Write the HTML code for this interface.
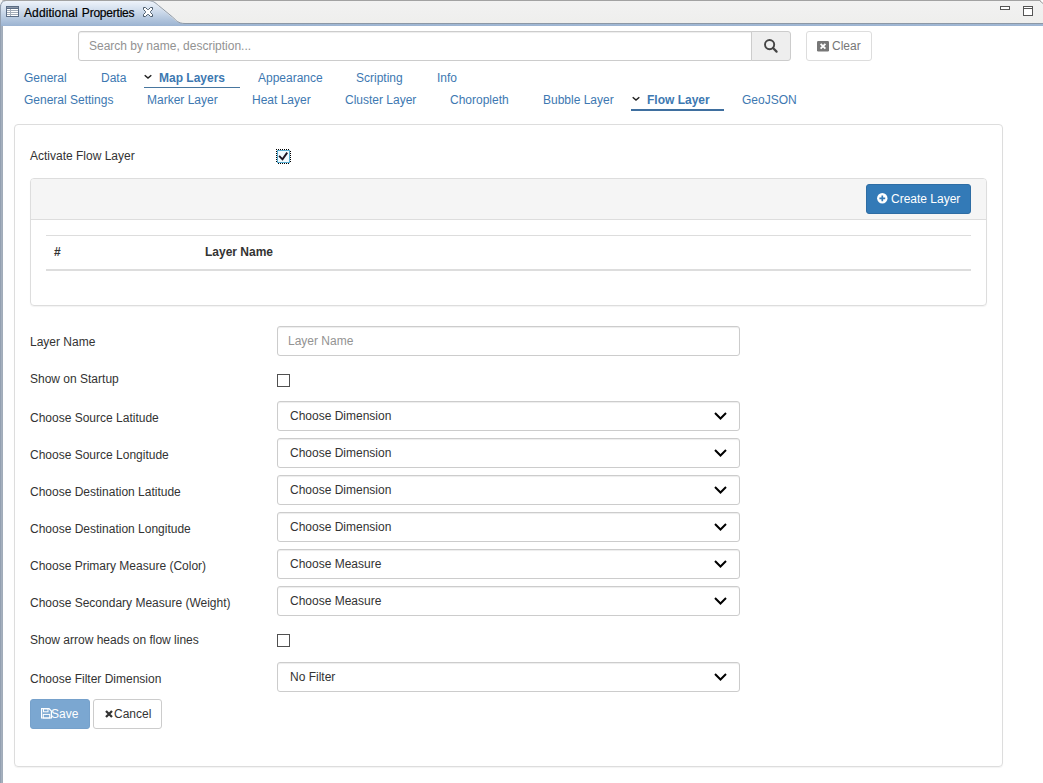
<!DOCTYPE html>
<html><head><meta charset="utf-8">
<style>
*{box-sizing:border-box}
html,body{margin:0;padding:0}
body{width:1043px;height:783px;overflow:hidden;background:#fff;font-family:"Liberation Sans",Arial,sans-serif;font-size:12px;color:#333;position:relative}
.abs{position:absolute}
svg{position:absolute;overflow:visible}
#title{left:24px;top:6px;font-size:12px;color:#000;-webkit-text-stroke:.2px #000;white-space:nowrap;line-height:14px}
/* search */
#search{left:78px;top:31px;width:674px;height:30px;border:1px solid #ccc;border-radius:3px 0 0 3px;padding:0 10px;line-height:28px;color:#929292;box-shadow:inset 0 1px 1px rgba(0,0,0,.075)}
#sbtn{left:751px;top:31px;width:40px;height:30px;border:1px solid #ccc;border-radius:0 3px 3px 0;background:#eee}
#clear{left:806px;top:31px;width:66px;height:30px;border:1px solid #ddd;border-radius:3px;color:#777;line-height:28px}
.nav{white-space:nowrap;color:#3d78b1;line-height:14px}
.nav.b{font-weight:bold}
.ul{height:1px;background:#47769f}
#panel{left:14px;top:124px;width:989px;height:643px;border:1px solid #ddd;border-radius:4px;box-shadow:0 1px 1px rgba(0,0,0,.05)}
#inner{left:30px;top:178px;width:957px;height:128px;border:1px solid #ddd;border-radius:4px;box-shadow:0 1px 1px rgba(0,0,0,.05)}
#ihead{left:31px;top:179px;width:955px;height:41px;background:#f5f5f5;border-bottom:1px solid #ddd;border-radius:3px 3px 0 0}
#create{left:866px;top:184px;width:105px;height:30px;background:#337ab7;border:1px solid #2e6da4;border-radius:3px;color:#fff;line-height:28px;white-space:nowrap}
.lbl{left:30px;white-space:nowrap;line-height:14px;color:#333}
.sel,.inp{left:277px;width:463px;height:30px;border:1px solid #ccc;border-radius:3px;line-height:28px;padding-left:12px;white-space:nowrap;box-shadow:inset 0 1px 1px rgba(0,0,0,.075);color:#333}
.inp{color:#939393;padding-left:10px}
.cb{left:277px;width:13px;height:13px;border:1px solid #505050;background:#fff}
</style></head><body>
<!-- eclipse chrome -->
<svg id="chrome" width="1043" height="27" style="left:0;top:0" viewBox="0 0 1043 27">
<defs>
<linearGradient id="tg" x1="0" y1="0" x2="0" y2="1"><stop offset="0" stop-color="#eef3fa"/><stop offset="0.35" stop-color="#d3dfee"/><stop offset="1" stop-color="#9bb3d1"/></linearGradient>
<linearGradient id="bg" x1="0" y1="0" x2="0" y2="1"><stop offset="0" stop-color="#f2f2f2"/><stop offset="1" stop-color="#eeeeec"/></linearGradient>
</defs>
<rect x="0" y="0" width="1043" height="26" fill="url(#bg)"/>
<path d="M0,26 L0,6 Q0,1 5,1 L147,1 C153,1 155,3 158,6 L172,17.5 C176,21 178,23.5 185,23.5 L1043,23.5 L1043,26 Z" fill="url(#tg)"/>
<path d="M0.5,7 Q0.5,1 6,0.5 L147,0.5 C153,0.5 155,2.5 158.5,5.5 L172.5,17 C176.5,20.5 178,23.5 185,23.5 L1043,23.5" fill="none" stroke="#8c98a6" stroke-width="1"/>
<rect x="0" y="0" width="1043" height="1" fill="#a2a2a2"/>
<path d="M0,0 L4,0 Q0.5,0.5 0,5 Z" fill="#f4f4f4"/>
<path d="M1043,0 L1040,0 L1043,3 Z" fill="#fff"/>
<path d="M1039.5,0.5 L1043,3.5" stroke="#9a9a9a" fill="none"/>
</svg>
<div class="abs" style="left:0;top:5px;width:1px;height:778px;background:#93a0b1"></div>
<div class="abs" style="left:1px;top:26px;width:1px;height:757px;background:#a5b0be"></div><div class="abs" style="left:2px;top:26px;width:1px;height:757px;background:#a1acb9"></div>
<!-- view icon -->
<svg width="13" height="11" style="left:6px;top:6px" viewBox="0 0 13 11" shape-rendering="crispEdges">
<rect x="0" y="0" width="13" height="11" fill="#5b6c84"/>
<rect x="1" y="1" width="11" height="1" fill="#8d99aa"/>
<rect x="1" y="3" width="11" height="7" fill="#a3acb8"/>
<g fill="#fff"><rect x="1" y="3" width="3" height="1"/><rect x="5" y="3" width="7" height="1"/><rect x="1" y="5" width="3" height="1"/><rect x="5" y="5" width="7" height="1"/><rect x="1" y="7" width="3" height="1"/><rect x="5" y="7" width="7" height="1"/><rect x="1" y="9" width="3" height="1"/><rect x="5" y="9" width="7" height="1"/></g>
</svg>
<div class="abs" id="title"><span style="letter-spacing:.1px">Additional</span> <span style="letter-spacing:-.22px;margin-left:.8px">Properties</span></div>
<!-- close X -->
<svg width="10" height="10" style="left:143px;top:7px" viewBox="0 0 10 10">
<path d="M0.5,0.5 L2.5,0.5 L4.5,2.5 L5.5,2.5 L7.5,0.5 L9.5,0.5 L9.5,2.5 L7.5,4.5 L7.5,5.5 L9.5,7.5 L9.5,9.5 L7.5,9.5 L5.5,7.5 L4.5,7.5 L2.5,9.5 L0.5,9.5 L0.5,7.5 L2.5,5.5 L2.5,4.5 L0.5,2.5 Z" fill="#fff" stroke="#4a5a6a" stroke-width="1"/>
</svg>
<!-- min / max -->
<svg width="10" height="4" style="left:1000px;top:6px" viewBox="0 0 10 4" shape-rendering="crispEdges"><rect x="0.5" y="0.5" width="9" height="3" fill="#fff" stroke="#555"/></svg>
<svg width="10" height="10" style="left:1023px;top:6px" viewBox="0 0 10 10" shape-rendering="crispEdges"><rect x="0.5" y="0.5" width="9" height="9" fill="#fff" stroke="#555"/><rect x="0" y="2" width="10" height="1" fill="#555"/></svg>

<div class="abs" id="search">Search by name, description...</div>
<div class="abs" id="sbtn"></div>
<svg width="14" height="14" style="left:763px;top:38px" viewBox="0 0 14 14"><circle cx="6.6" cy="6.6" r="4.6" fill="none" stroke="#444" stroke-width="1.9"/><path d="M10,10 L13.6,13.6" stroke="#444" stroke-width="2.2" stroke-linecap="round"/></svg>
<div class="abs" id="clear"><span style="margin-left:25px">Clear</span></div>
<svg width="12" height="11" style="left:817px;top:40.5px" viewBox="0 0 12 11"><rect x="0" y="0" width="12" height="10.5" rx="1.2" fill="#777"/><path d="M3.6,2.8 L8.4,7.6 M8.4,2.8 L3.6,7.6" stroke="#fff" stroke-width="1.9"/></svg>

<div class="abs nav" style="left:24px;top:71px">General</div>
<div class="abs nav" style="left:101px;top:71px">Data</div>
<svg width="8" height="6" style="left:143.8px;top:73.6px" viewBox="0 0 8 6"><path d="M0.7,1.2 L4,4 L7.3,1.2" fill="none" stroke="#222" stroke-width="1.5"/></svg>
<div class="abs nav b" style="left:159px;top:71px">Map Layers</div>
<div class="abs nav" style="left:258px;top:71px">Appearance</div>
<div class="abs nav" style="left:356px;top:71px">Scripting</div>
<div class="abs nav" style="left:437px;top:71px">Info</div>
<div class="abs ul" style="left:144px;top:87px;width:96px"></div>

<div class="abs nav" style="left:24px;top:93px">General Settings</div>
<div class="abs nav" style="left:147px;top:93px">Marker Layer</div>
<div class="abs nav" style="left:252px;top:93px">Heat Layer</div>
<div class="abs nav" style="left:345px;top:93px">Cluster Layer</div>
<div class="abs nav" style="left:450px;top:93px">Choropleth</div>
<div class="abs nav" style="left:543px;top:93px">Bubble Layer</div>
<svg width="8" height="6" style="left:632px;top:95.6px" viewBox="0 0 8 6"><path d="M0.7,1.2 L4,4 L7.3,1.2" fill="none" stroke="#222" stroke-width="1.5"/></svg>
<div class="abs nav b" style="left:647px;top:93px">Flow Layer</div>
<div class="abs nav" style="left:742px;top:93px">GeoJSON</div>
<div class="abs ul" style="left:631px;top:109px;width:93px;height:2px;background:#3f6f9f"></div>

<div class="abs" id="panel"></div>
<div class="abs lbl" style="top:149px">Activate Flow Layer</div>
<svg width="15" height="15" style="left:276px;top:149px" viewBox="0 0 15 15">
<rect x="1.5" y="1.5" width="12" height="12" fill="#f0faff" stroke="#58acd0" shape-rendering="crispEdges"/>
<path d="M0,0.5 H13 M14.5,2 V13 M2,14.5 H13 M0.5,0 V13" stroke="#000" stroke-width="1" stroke-dasharray="1 1" shape-rendering="crispEdges" fill="none"/>
<path d="M3.1,6.9 L6.5,10.3 L11.2,3.6" fill="none" stroke="#1a1220" stroke-width="1.9"/>
</svg>
<div class="abs" id="inner"></div>
<div class="abs" id="ihead"></div>
<div class="abs" id="create"><span style="margin-left:24px">Create Layer</span></div>
<svg width="11" height="11" style="left:877px;top:193px" viewBox="0 0 11 11"><circle cx="5.3" cy="5.3" r="5.2" fill="#fff"/><path d="M5.3,2.4 V8.2 M2.4,5.3 H8.2" stroke="#337ab7" stroke-width="1.7"/></svg>
<div class="abs" style="left:46px;top:235px;width:925px;height:1px;background:#ddd"></div>
<div class="abs" style="left:46px;top:269px;width:925px;height:2px;background:#ddd"></div>
<div class="abs lbl" style="left:54px;top:245px;font-weight:bold">#</div>
<div class="abs lbl" style="left:205px;top:245px;font-weight:bold">Layer Name</div>

<div class="abs lbl" style="top:335px">Layer Name</div>
<div class="abs inp" style="top:326px">Layer Name</div>
<div class="abs lbl" style="top:372px">Show on Startup</div>
<div class="abs cb" style="top:374px"></div>
<div class="abs lbl" style="top:411px">Choose Source Latitude</div>
<div class="abs sel" style="top:401px">Choose Dimension</div>
<div class="abs lbl" style="top:448px">Choose Source Longitude</div>
<div class="abs sel" style="top:438px">Choose Dimension</div>
<div class="abs lbl" style="top:485px">Choose Destination Latitude</div>
<div class="abs sel" style="top:475px">Choose Dimension</div>
<div class="abs lbl" style="top:522px">Choose Destination Longitude</div>
<div class="abs sel" style="top:512px">Choose Dimension</div>
<div class="abs lbl" style="top:559px">Choose Primary Measure (Color)</div>
<div class="abs sel" style="top:549px">Choose Measure</div>
<div class="abs lbl" style="top:596px">Choose Secondary Measure (Weight)</div>
<div class="abs sel" style="top:586px">Choose Measure</div>
<div class="abs lbl" style="top:633px">Show arrow heads on flow lines</div>
<div class="abs cb" style="top:634px"></div>
<div class="abs lbl" style="top:672px">Choose Filter Dimension</div>
<div class="abs sel" style="top:662px">No Filter</div>
<svg width="1" height="1" style="left:0;top:0">
<g fill="none" stroke="#000" stroke-width="2">
<path d="M715,413 L720.5,418.5 L726,413"/>
<path d="M715,450 L720.5,455.5 L726,450"/>
<path d="M715,487 L720.5,492.5 L726,487"/>
<path d="M715,524 L720.5,529.5 L726,524"/>
<path d="M715,561 L720.5,566.5 L726,561"/>
<path d="M715,598 L720.5,603.5 L726,598"/>
<path d="M715,674 L720.5,679.5 L726,674"/>
</g></svg>

<div class="abs" style="left:30px;top:699px;width:60px;height:30px;background:#7ba7d1;border:1px solid #76a1cb;border-radius:3px;color:#fff;line-height:28px"><span style="margin-left:20px">Save</span></div>
<svg width="11" height="11" style="left:41px;top:707.8px" viewBox="0 0 11 11"><path d="M0.6,0.6 H8 L10.4,3 V10 H0.6 Z" fill="none" stroke="#fff" stroke-width="1.2"/><rect x="2.5" y="0.8" width="4.5" height="3" fill="none" stroke="#fff" stroke-width="1"/><rect x="2.3" y="6.4" width="6.4" height="3.6" fill="none" stroke="#fff" stroke-width="1"/></svg>
<div class="abs" style="left:93px;top:699px;width:69px;height:30px;background:#fff;border:1px solid #ccc;border-radius:3px;color:#333;line-height:28px"><span style="margin-left:20px">Cancel</span></div>
<svg width="8" height="8" style="left:105px;top:710px" viewBox="0 0 8 8"><path d="M1,1 L7,7 M7,1 L1,7" stroke="#333" stroke-width="2.3"/></svg>
</body></html>
